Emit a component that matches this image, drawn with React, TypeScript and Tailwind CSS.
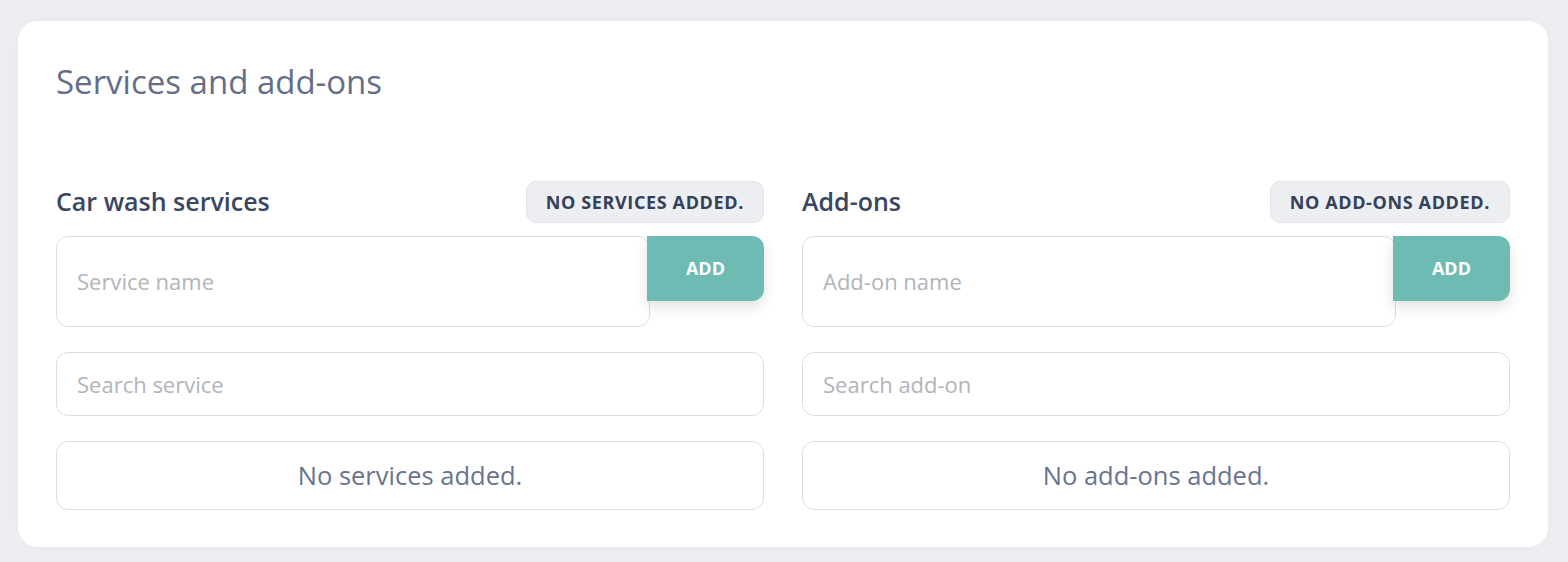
import React from 'react';

interface ListPanelProps {
  title: string;
  badge: string;
  namePlaceholder: string;
  searchPlaceholder: string;
  emptyText: string;
}

const ListPanel: React.FC<ListPanelProps> = ({ title, badge, namePlaceholder, searchPlaceholder, emptyText }) => {
  return (
    <div className="flex flex-col">
      {/* Cabecera de la lista */}
      <div className="flex items-center justify-between h-[42px]">
        <h3 className="text-[25px] font-semibold text-[#3a4661]">{title}</h3>
        <span className="flex items-center h-[42px] px-[19px] rounded-[10px] bg-[#eceef2] border border-[#e2e4e9] text-[18px] font-bold uppercase tracking-[0.035em] text-[#344159]">
          {badge}
        </span>
      </div>

      <div className="flex items-start mt-[13px]">
        <input
          placeholder={namePlaceholder}
          className="flex-1 h-[91px] px-[20px] pb-[2px] rounded-[12px] border border-[#dcdde0] bg-white text-[22px] text-[#344159] placeholder:text-[#b1b4ba] outline-none"
        />
        <button className="relative z-10 -ml-[3px] w-[117px] h-[65px] rounded-r-[12px] bg-[#6dbbb3] text-white text-[18px] font-bold shadow-[0_6px_14px_rgba(0,0,0,0.12)]">
          ADD
        </button>
      </div>

      <input
        placeholder={searchPlaceholder}
        className="mt-[25px] h-[64px] px-[20px] rounded-[12px] border border-[#dcdde0] bg-white text-[22px] text-[#344159] placeholder:text-[#b1b4ba] outline-none"
      />

      <div className="mt-[25px] h-[69px] flex items-center justify-center rounded-[12px] border border-[#dcdde0] text-[25.5px] text-[#697390]">
        {emptyText}
      </div>
    </div>
  );
};

export default function App() {
  return (
    <div
      className="w-[1568px] h-[562px] bg-[#eeeff2] pt-[21px] px-[18px]"
      style={{ fontFamily: '"Open Sans", "Noto Sans", sans-serif' }}
    >
      <div className="w-[1530px] h-[526px] bg-white rounded-[20px] px-[38px] pt-[39px] shadow-[0_0_30px_rgba(0,0,0,0.03)]">
        <h2 className="text-[33px] leading-[44px] text-[#646e88]">Services and add-ons</h2>

        <div className="grid grid-cols-2 gap-[38px] mt-[77px]">
          <ListPanel
            title="Car wash services"
            badge="No services added."
            namePlaceholder="Service name"
            searchPlaceholder="Search service"
            emptyText="No services added."
          />
          <ListPanel
            title="Add-ons"
            badge="No add-ons added."
            namePlaceholder="Add-on name"
            searchPlaceholder="Search add-on"
            emptyText="No add-ons added."
          />
        </div>
      </div>
    </div>
  );
}
